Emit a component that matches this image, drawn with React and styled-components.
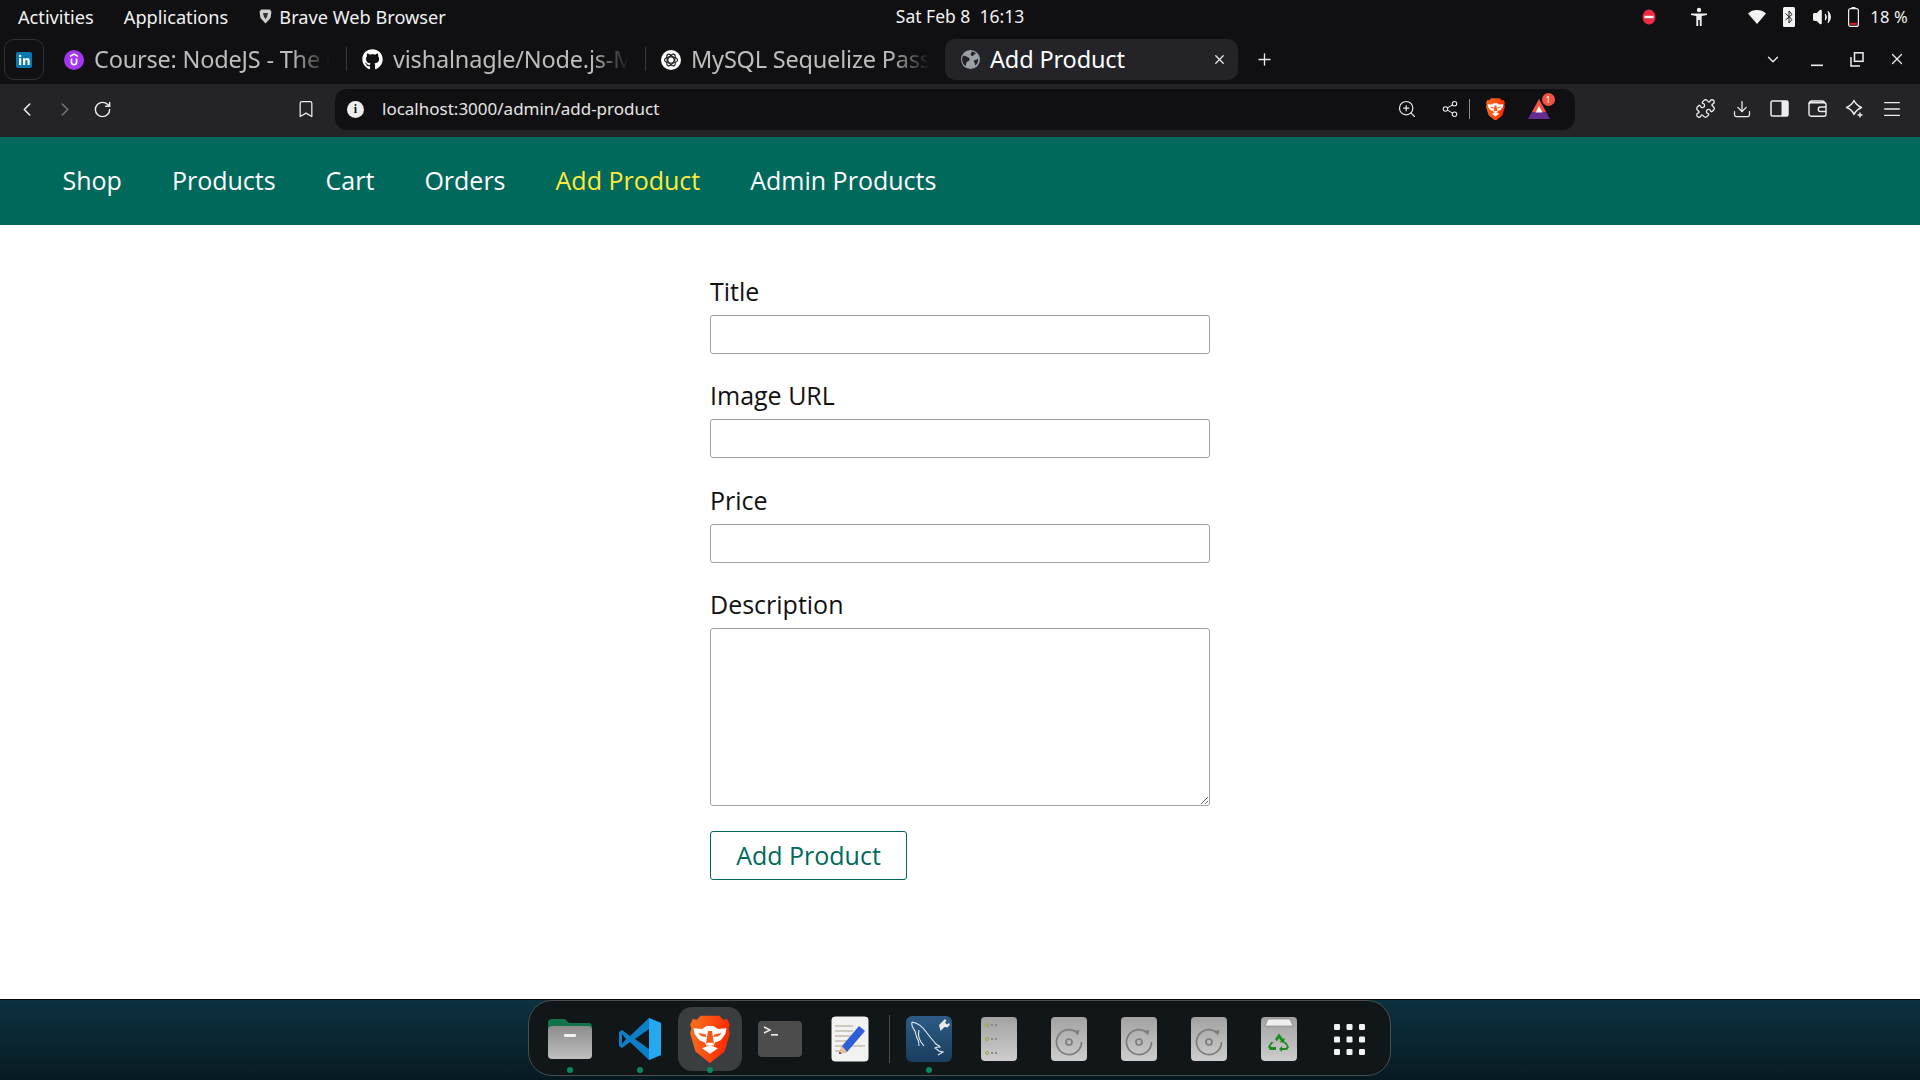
import React from "react";
import styled, { createGlobalStyle } from "styled-components";
import {
  ChevronLeft, ChevronRight, RotateCw, Bookmark, ZoomIn, Share2, Puzzle, Download,
  Menu, X, Plus, ChevronDown, Volume2,
} from "lucide-react";
import { FaGithub } from "react-icons/fa";

const Global = createGlobalStyle`
  html, body { margin: 0; padding: 0; background: #fff; }
  * { box-sizing: border-box; }
`;
const ui = `"Noto Sans", "Open Sans", sans-serif`;

const Screen = styled.div`
  width: 1920px; height: 1080px; display: flex; flex-direction: column; overflow: hidden;
  font-family: "Open Sans", sans-serif; background: #fff;
`;
const TopBar = styled.div`
  height: 33px; background: #101012; color: #f2f2f2; display: flex; align-items: center;
  font-family: ${ui}; font-size: 18.2px; padding: 0 12px 0 18px; position: relative;
`;
const TopItem = styled.span`
  margin-right: ${p => p.$mr || 0}px; display: inline-flex; align-items: center; gap: 7px; white-space: nowrap;
`;
const Clock = styled.span`
  position: absolute; left: 50%; top: 4px; transform: translateX(-50%); white-space: pre; font-size: 17.5px;
`;
const Tray = styled.div`
  margin-left: auto; display: flex; align-items: center; color: #f2f2f2;
`;
const TrayIcon = styled.span`
  display: inline-flex; margin-left: ${p => p.$ml || 0}px;
`;
const Percent = styled.span`margin-left: 11px; font-size: 16.5px; letter-spacing: .2px;`;

const TabStrip = styled.div`
  height: 51px; background: #101012; display: flex; align-items: flex-start; padding: 6px 4px 0 4px; position: relative;
`;
const Pinned = styled.div`
  width: 40px; height: 41px; border: 1px solid #303236; border-radius: 10px; display: flex; align-items: center; justify-content: center; margin-right: 5px;
`;
const Tab = styled.div`
  width: ${p => p.$w}px; height: 41px; display: flex; align-items: center; border-radius: 10px; flex: none; position: relative;
  padding-left: ${p => (p.$active ? 16 : 15)}px; padding-right: ${p => (p.$active ? 0 : 16)}px; gap: 10px;
  background: ${p => (p.$active ? "#232328" : "transparent")};
`;
const TabTitle = styled.span`
  font-family: ${ui}; font-size: 23.5px; letter-spacing: ${p => (p.$active ? "-0.15px" : "-0.2px")}; white-space: nowrap; overflow: hidden; flex: 1;
  line-height: 30px; padding-bottom: 2px;
  color: ${p => (p.$active ? "#fff" : "#bdbdbd")};
  ${p => (p.$active ? "" : `mask-image: linear-gradient(to right, #000 84%, transparent 100%);`)}
`;
const TabSep = styled.span`width: 1px; height: 24px; background: #3a3b3f; margin-top: 8px; flex: none;`;
const TabClose = styled.span`display: inline-flex; margin-right: 11px; color: #eee;`;
const NewTab = styled.span`display: inline-flex; color: #e8e8e8; margin: 11px 0 0 17px;`;
const WinControls = styled.div`
  margin-left: auto; display: flex; align-items: center; color: #eee; height: 32px; margin-top: 4px; margin-right: 10px; gap: 22px;
`;
const WinBtn = styled.span`display: inline-flex; width: 18px; justify-content: center; margin-right: ${p => p.$mr || 0}px;`;

const Toolbar = styled.div`
  height: 53px; background: #232328; display: flex; align-items: flex-start; padding: 5px 14px 0 16px; color: #eee;
`;
const ToolBtn = styled.span`
  display: inline-flex; width: 22px; height: 40px; align-items: center; justify-content: center; flex: none;
  margin-right: ${p => p.$mr || 0}px; margin-left: ${p => p.$ml || 0}px; color: ${p => p.$dim ? "#77787c" : "#eee"};
`;
const UrlBar = styled.div`
  width: 1240px; height: 41px; background: #101012; border-radius: 12px; display: flex; align-items: center; padding: 0 14px 1px 12px; flex: none; margin-left: 18px; margin-right: 119px;
`;
const InfoDot = styled.span`
  width: 17px; height: 17px; border-radius: 50%; background: #eee; color: #101012; font: 700 12px/17px "Liberation Serif", serif; text-align: center; flex: none; margin-right: 18px;
`;
const UrlText = styled.span`
  font-family: ${ui}; font-size: 17px; line-height: 22px; padding-bottom: 1px; color: #e6e6e6; flex: 1;
`;
const UrlSep = styled.span`width: 1px; height: 20px; background: #8b8b8b; margin: 0 15.5px 0 8.5px;`;
const BatWrap = styled.span`position: relative; display: inline-flex; margin-left: 23px; margin-right: 11.5px;`;
const Badge = styled.span`
  position: absolute; top: -6px; right: -5px; width: 13px; height: 13px; background: #f0533f; border-radius: 50%; color: #fff; font: 9px/13px ${ui}; text-align: center;
`;
const Extras = styled.div`display: flex; gap: 15.4px; align-items: center; height: 41px; margin-top: -1px;`;

const Header = styled.header`
  height: 88px; background: #00695c; display: flex; align-items: center; padding: 0 62.5px 1px; gap: 50px; flex: none;
`;
const NavLink = styled.a`
  font-size: 25px; color: ${p => (p.$active ? "#ffeb3b" : "#fff")}; text-decoration: none; line-height: 1;
`;

const Main = styled.main`
  flex: 1; background: #fff; padding-top: 50px; min-height: 0;
`;
const Form = styled.form`width: 500px; margin: 0 auto; display: block;`;
const Control = styled.div`margin-bottom: 25.3px;`;
const Label = styled.label`
  display: block; font-size: 25px; line-height: 33px; color: #111; margin-bottom: 7px;
`;
const Input = styled.input`
  display: block; width: 100%; height: 39px; border: 1px solid #a1a1a1; border-radius: 3px; background: #fff; outline: none;
`;
const Textarea = styled.textarea`
  display: block; width: 100%; height: 178px; border: 1px solid #a1a1a1; border-radius: 3px; background: #fff; outline: none; resize: vertical;
`;
const Submit = styled.button`
  display: block; width: 197px; height: 49px; background: #fff; border: 1px solid #00695c; border-radius: 3px;
  color: #00695c; font: 25px "Open Sans", sans-serif; padding: 0 0 2px; cursor: pointer;
`;

const DockArea = styled.div`
  height: 81px; flex: none; border-top: 1px solid #050505; background: linear-gradient(180deg, #0c3140 0%, #0a2530 55%, #071a22 100%);
  display: flex; justify-content: center; padding: 0 1px 0 0;
`;
const Dock = styled.div`
  width: 863px; height: 76px; background: #111619; border: 1px solid #4a4d4f; border-radius: 24px; display: flex; padding: 6px 6px 0 6px;
`;
const Slot = styled.div`
  width: ${p => (p.$focus ? 64 : 70)}px; height: 64px; display: flex; align-items: center; justify-content: center; border-radius: 14px; position: relative; flex: none;
  background: ${p => (p.$focus ? "#3b3e40" : "transparent")};
  margin: 0 ${p => (p.$focus ? 3 : 0)}px;
`;
const RunDot = styled.span`
  position: absolute; bottom: -2px; left: 50%; margin-left: -3px; width: 6px; height: 6px; border-radius: 50%; background: #0a8a5c;
`;
const DockSep = styled.span`width: 1px; height: 48px; background: #4b4e50; margin: 8px 4px 0 4px; flex: none;`;

const Linkedin = () => (
  <svg width="16" height="16" viewBox="0 0 16 16"><rect width="16" height="16" rx="2" fill="#0a78b5"/><rect x="3" y="6.2" width="2.2" height="6.8" fill="#fff"/><circle cx="4.1" cy="4" r="1.3" fill="#fff"/><path d="M7 6.2h2.1v1c.5-.8 1.3-1.2 2.2-1.2 1.7 0 2.4 1.1 2.4 2.9V13h-2.2V9.4c0-.9-.3-1.5-1.1-1.5-.9 0-1.2.7-1.2 1.5V13H7z" fill="#fff"/></svg>
);
const Udemy = () => (
  <svg width="20" height="20" viewBox="0 0 20 20"><circle cx="10" cy="10" r="10" fill="#a435f0"/><path d="M10 3.2 14 5.6v1.6L10 4.9 6 7.200V5.600z" fill="#fff"/><path d="M6.600 8.500h1.700v3.500c0 1.100.7 1.800 1.700 1.800s1.700-.7 1.700-1.800V8.500h1.700v3.700c0 2-1.500 3.300-3.400 3.300s-3.400-1.300-3.400-3.300z" fill="#fff"/></svg>
);
const ChatGpt = () => (
  <svg width="20" height="20" viewBox="0 0 20 20"><circle cx="10" cy="10" r="10" fill="#fff"/><g fill="none" stroke="#222" strokeWidth="1.200"><ellipse cx="10" cy="10" rx="6.500" ry="3.200"/><ellipse cx="10" cy="10" rx="6.500" ry="3.200" transform="rotate(60 10 10)"/><ellipse cx="10" cy="10" rx="6.500" ry="3.200" transform="rotate(120 10 10)"/></g></svg>
);
const Globe = () => (
  <svg width="19" height="19" viewBox="0 0 19 19"><circle cx="9.500" cy="9.500" r="9.500" fill="#9aa0a6"/><path d="M2 6c2-.5 3 .5 4.500 1s2.500 1.500 2 3-2.500 1-3 2.500-.5 3-1 3.500C2.500 14.500 1 12 1 9.500 1 8.200 1.500 7 2 6zM11 1.500c1.500.2 3 1 4 2-1 .8-2 .8-2.500 1.800s-1.500 1-2.500.3.2-2.800 1-4.100zM17 9c.4 2.500-.5 4.800-2.500 6.500-.7-1-.5-2.500-1.500-3.500s.5-2 2-2.300 1.200-.7 2-.7z" fill="#232328"/></svg>
);
const BraveGlyph = ({ s = 20 }) => (
  <svg width={s} height={s * 1.21} viewBox="0 0 120 146">
    <defs><linearGradient id="bv" x1="0" x2="1" y1="0" y2="0.2"><stop offset="0" stopColor="#f4711f"/><stop offset="0.55" stopColor="#fb4f12"/><stop offset="1" stopColor="#ff2a00"/></linearGradient></defs>
    <path d="M32 2H88L100 14 112 12 120 30 116 40 120 55 104 110 60 145 16 110 0 55 4 40 0 30 8 12 20 14Z" fill="url(#bv)"/>
    <path d="M10 40 36 42 50 33H70L84 42 110 40 106 58 92 76 74 84 72 92H48L46 84 28 76 14 58Z" fill="#fff"/>
    <path d="M24 54 46 58 50 66 34 64ZM96 54 74 58 70 66 86 64ZM54 48H66L72 86H48Z" fill="#f9561a"/>
    <path d="M48 84H72L60 92Z" fill="#fff"/>
    <path d="M36 100 60 91 84 100 60 117Z" fill="#fff"/>
  </svg>
);
const TrayShield = () => (
  <svg width="13" height="15" viewBox="0 0 13 15"><path d="M2 .5h9l1.500 2.500-1 6L6.500 14.500 1.500 9l-1-6z" fill="#cfcfcf"/><path d="M4 4h5l-1 4-1.500 2L5 8z" fill="#333"/></svg>
);
const Bat = () => (
  <svg width="22" height="20" viewBox="0 0 22 20"><path d="M11 0 22 20H0z" fill="#662d91"/><path d="M11 0 18 13H4z" fill="#f0533f"/><path d="M11 7l3.500 6.500h-7z" fill="#fff"/></svg>
);
const StopIcon = () => (
  <svg width="14" height="16" viewBox="0 0 14 16"><ellipse cx="7" cy="8" rx="6.500" ry="7.500" fill="#ed2b45"/><rect x="2.500" y="6.800" width="9" height="2.400" fill="#fff"/></svg>
);
const Person = () => (
  <svg width="16" height="20" viewBox="0 0 16 20" fill="#eee"><circle cx="8" cy="3" r="2.200"/><path d="M0 6.500h16v1.600l-5.300.9V19H8.800v-6H7.200v6H5.300V9L0 8.100z"/></svg>
);
const Wifi = () => (
  <svg width="18" height="16" viewBox="0 0 18 16"><path d="M0 4.500C2.500 2 5.500 1 9 1s6.500 1 9 3.500L9 15z" fill="#f2f2f2"/></svg>
);
const BluetoothBox = () => (
  <svg width="12" height="20" viewBox="0 0 12 20"><rect width="12" height="20" rx="1.500" fill="#f2f2f2"/><path d="M2.500 6.500 9 12.500 6 16V4l3 3.500L2.500 13" fill="none" stroke="#222" strokeWidth="1"/></svg>
);
const BatteryIcon = () => (
  <svg width="11" height="20" viewBox="0 0 11 20"><rect x="3.500" y="0" width="4" height="2" fill="#eee"/><rect x=".6" y="1.600" width="9.800" height="17.800" rx="2" fill="none" stroke="#eee" strokeWidth="1.200"/><rect x="2" y="15.800" width="7" height="2" fill="#e01b24"/></svg>
);
const RestoreIcon = () => (
  <svg width="14" height="15" viewBox="0 0 14 15" fill="none" stroke="#eee" strokeWidth="1.500"><rect x="4.500" y=".8" width="8.500" height="8.500"/><path d="M1 5v9h9"/></svg>
);
const MinIcon = () => (
  <svg width="14" height="15" viewBox="0 0 14 15"><rect x="1" y="12.500" width="12" height="1.600" fill="#eee"/></svg>
);
const SidebarIcon = () => (
  <svg width="19" height="17" viewBox="0 0 19 17"><rect x="1" y="1" width="17" height="15" rx="1.500" fill="none" stroke="#eee" strokeWidth="1.500"/><rect x="11.500" y="1" width="6.500" height="15" fill="#eee"/></svg>
);
const WalletIcon = () => (
  <svg width="19" height="17" viewBox="0 0 19 17" fill="none" stroke="#eee" strokeWidth="1.400"><rect x="1" y="2.800" width="17" height="13.400" rx="2"/><path d="M1 4c.2-2 1.500-3 3-3h10c1.500 0 2.500.8 3 2"/><path d="M18 7h-5.500a2 2 0 0 0 0 4.500H18"/></svg>
);
const SparkIcon = () => (
  <svg width="19" height="19" viewBox="0 0 19 19" fill="none" stroke="#eee" strokeWidth="1.400"><path d="M9 1.500Q11 6 16.500 8.500 11.500 10.500 9 15.500 7 10.500 1.500 8.500 7 6 9 1.500Z" strokeLinejoin="round"/><path d="M15 13.500v5M12.500 16h5"/></svg>
);

const FolderIcon = () => (
  <svg width="46" height="42" viewBox="0 0 46 42">
    <defs><linearGradient id="fg" x1="0" x2="0" y1="0" y2="1"><stop offset="0" stopColor="#8c8c8c"/><stop offset="1" stopColor="#c0c0c0"/></linearGradient></defs>
    <path d="M1 5q0-4 4-4h12q2 0 3 2t3 2h19q3 0 3 4v8H1z" fill="#12734a"/>
    <rect x="1" y="8" width="44" height="33" rx="4" fill="url(#fg)"/>
    <rect x="17" y="16" width="12" height="3" rx="1" fill="#f2f2f2"/>
  </svg>
);
const VsCode = () => (
  <svg width="44" height="44" viewBox="0 0 44 44">
    <path d="M31 1 12 19 4 13 1 15v14l3 2 8-6 19 18 12-5V6z" fill="#0e7fc7"/>
    <path d="M31 1l12 5v32l-12 5z" fill="#24a8f0"/>
    <path d="M31 12v20L17 22z" fill="#111619"/>
    <path d="M4 17l4 5-4 5z" fill="#111619"/>
  </svg>
);
const TerminalIcon = () => (
  <svg width="44" height="36" viewBox="0 0 44 36">
    <rect width="44" height="36" rx="4" fill="#4c4c4c"/>
    <path d="M6 6l6 3-6 3" fill="none" stroke="#eee" strokeWidth="1.400"/>
    <rect x="13" y="13" width="7" height="1.600" fill="#eee"/>
  </svg>
);
const GeditIcon = () => (
  <svg width="38" height="46" viewBox="0 0 38 46">
    <rect x=".5" y=".5" width="37" height="45" rx="4" fill="#f2f2f2"/>
    <g fill="#cfc9bd"><rect x="4" y="9" width="18" height="2"/><rect x="4" y="14" width="18" height="2"/><rect x="4" y="19" width="16" height="2"/><rect x="4" y="24" width="12" height="2"/><rect x="4" y="29" width="30" height="2"/><rect x="4" y="34" width="8" height="2"/></g>
    <path d="M28 10l6 5-18 21-8 2 3-8z" fill="#2f5fd8"/>
    <path d="M11 30l5 6-8 2z" fill="#f0c090"/>
    <path d="M8.800 35.500l1.600 2L8 38z" fill="#333"/>
  </svg>
);
const MysqlIcon = () => (
  <svg width="46" height="46" viewBox="0 0 46 46">
    <defs><linearGradient id="my" x1="0" x2="0" y1="0" y2="1"><stop offset="0" stopColor="#2d5a86"/><stop offset="1" stopColor="#1a3e5e"/></linearGradient></defs>
    <rect width="46" height="46" rx="6" fill="url(#my)"/>
    <path d="M6 6c6 1 11 5 15 11 3 4 5 6 8 10 1 2 4 2 5 4-2 0-4 0-5 1l4 3 4 1-5 3M6 6c-1 4 1 6 3 9 1 3 1 6 3 9 1 2 1 4 1 6M13 14c-1 4 0 9 2 12l3 4" fill="none" stroke="#e8eef3" strokeWidth="1.100"/>
    <path d="M33 9l6-6 1.500 1.500-1.500 2 2 2 2-1.500 1 1.500-2.500 3-3-.5-4 4z" fill="#e8e8e8"/>
  </svg>
);
const Tile = styled.svg`display: block;`;
const TileDefs = ({ id }) => (
  <defs><linearGradient id={id} x1="0" x2="0" y1="0" y2="1"><stop offset="0" stopColor="#a2a2a2"/><stop offset="1" stopColor="#cdcdcd"/></linearGradient></defs>
);
const ServerIcon = () => (
  <Tile width="36" height="44" viewBox="0 0 36 44">
    <TileDefs id="sv"/><rect width="36" height="44" rx="4" fill="url(#sv)"/>
    {[8, 22, 36].map(y => (
      <g key={y}><circle cx="6" cy={y} r="1.500" fill="none" stroke="#8fb23a"/><rect x="10" y={y - 1} width="2" height="2" fill="#888"/><rect x="14" y={y - 1} width="2" height="2" fill="#888"/></g>
    ))}
  </Tile>
);
const DiscIcon = ({ id }) => (
  <Tile width="36" height="44" viewBox="0 0 36 44">
    <TileDefs id={id}/><rect width="36" height="44" rx="4" fill={`url(#${id})`}/>
    <path d="M26 15.500A12.500 12.500 0 1 0 30.500 25" fill="none" stroke="#7c7c7c" strokeWidth="1.700"/>
    <path d="M23 14l5.500-1-1.500 5.500z" fill="#7c7c7c"/>
    <circle cx="18" cy="25" r="3" fill="none" stroke="#7c7c7c" strokeWidth="1.700"/>
  </Tile>
);
const TrashIcon = () => (
  <Tile width="36" height="44" viewBox="0 0 36 44">
    <TileDefs id="tr"/><rect width="36" height="44" rx="4" fill="url(#tr)"/>
    <path d="M4 9l3-7h22l3 7z" fill="#eee" stroke="#777" strokeWidth=".6"/>
    <g fill="#1c8a1c"><path d="M14 22l4-5.500 4 5.500 1.800-1-.6 5-4.700-1 1.500-1-2-2.800-2 3z"/><path d="M25 25l3 5-2 3h-5v2l-3-3 3-3v2h4l1-2-3.500-3.300z"/><path d="M10 25l-3 5 2 3h6v-3H10l-.5-1 3-4z"/></g>
  </Tile>
);
const AppGrid = () => (
  <svg width="31" height="31" viewBox="0 0 31 31" fill="#f2f2f2">
    {[0, 12.5, 25].flatMap(y => [0, 12.5, 25].map(x => <rect key={`${x}-${y}`} x={x} y={y} width="6" height="6" rx="1.200"/>))}
  </svg>
);

export default function App() {
  return (
    <Screen>
      <Global />
      <TopBar>
        <TopItem $mr={30}>Activities</TopItem>
        <TopItem $mr={31}>Applications</TopItem>
        <TopItem><TrayShield />Brave Web Browser</TopItem>
        <Clock>Sat Feb 8  16:13</Clock>
        <Tray>
          <TrayIcon><StopIcon /></TrayIcon>
          <TrayIcon $ml={35}><Person /></TrayIcon>
          <TrayIcon $ml={41}><Wifi /></TrayIcon>
          <TrayIcon $ml={17}><BluetoothBox /></TrayIcon>
          <TrayIcon $ml={17}><Volume2 size={20} fill="#f2f2f2" strokeWidth={1.500} /></TrayIcon>
          <TrayIcon $ml={16}><BatteryIcon /></TrayIcon>
          <Percent>18 %</Percent>
        </Tray>
      </TopBar>

      <TabStrip>
        <Pinned><Linkedin /></Pinned>
        <Tab $w={297}><Udemy /><TabTitle>Course: NodeJS - The Complete Guide</TabTitle></Tab>
        <TabSep />
        <Tab $w={298}><FaGithub size={21} color="#fff" /><TabTitle>vishalnagle/Node.js-MySQL</TabTitle></Tab>
        <TabSep />
        <Tab $w={299}><ChatGpt /><TabTitle>MySQL Sequelize Password</TabTitle></Tab>
        <Tab $active $w={293}><Globe /><TabTitle $active>Add Product</TabTitle><TabClose><X size={15} strokeWidth={2} /></TabClose></Tab>
        <NewTab><Plus size={19} strokeWidth={1.700} /></NewTab>
        <WinControls>
          <WinBtn $mr={4}><ChevronDown size={21} strokeWidth={1.800} /></WinBtn>
          <WinBtn><MinIcon /></WinBtn>
          <WinBtn><RestoreIcon /></WinBtn>
          <WinBtn><X size={20} strokeWidth={1.600} /></WinBtn>
        </WinControls>
      </TabStrip>

      <Toolbar>
        <ToolBtn $mr={16}><ChevronLeft size={23} strokeWidth={1.700} /></ToolBtn>
        <ToolBtn $mr={15} $dim><ChevronRight size={23} strokeWidth={1.700} /></ToolBtn>
        <ToolBtn $mr={182}><RotateCw size={19} strokeWidth={1.800} /></ToolBtn>
        <ToolBtn><Bookmark size={20} strokeWidth={1.500} /></ToolBtn>
        <UrlBar>
          <InfoDot>i</InfoDot>
          <UrlText>localhost:3000/admin/add-product</UrlText>
          <ToolBtn><ZoomIn size={20} strokeWidth={1.400} /></ToolBtn>
          <ToolBtn $ml={21}><Share2 size={18} strokeWidth={1.400} /></ToolBtn>
          <UrlSep />
          <BraveGlyph s={19} />
          <BatWrap><Bat /><Badge>1</Badge></BatWrap>
        </UrlBar>
        <Extras>
          <ToolBtn><Puzzle size={21} strokeWidth={1.500} /></ToolBtn>
          <ToolBtn><Download size={20} strokeWidth={1.500} /></ToolBtn>
          <ToolBtn><SidebarIcon /></ToolBtn>
          <ToolBtn><WalletIcon /></ToolBtn>
          <ToolBtn><SparkIcon /></ToolBtn>
          <ToolBtn><Menu size={22} strokeWidth={1.400} /></ToolBtn>
        </Extras>
      </Toolbar>

      <Header>
        <NavLink>Shop</NavLink>
        <NavLink>Products</NavLink>
        <NavLink>Cart</NavLink>
        <NavLink>Orders</NavLink>
        <NavLink $active>Add Product</NavLink>
        <NavLink>Admin Products</NavLink>
      </Header>

      <Main>
        <Form onSubmit={e => e.preventDefault()}>
          <Control><Label>Title</Label><Input type="text" /></Control>
          <Control><Label>Image URL</Label><Input type="text" /></Control>
          <Control><Label>Price</Label><Input type="text" /></Control>
          <Control><Label>Description</Label><Textarea /></Control>
          <Submit type="submit">Add Product</Submit>
        </Form>
      </Main>

      <DockArea>
        <Dock>
          <Slot><FolderIcon /><RunDot /></Slot>
          <Slot><VsCode /><RunDot /></Slot>
          <Slot $focus><BraveGlyph s={40} /><RunDot /></Slot>
          <Slot><TerminalIcon /></Slot>
          <Slot><GeditIcon /></Slot>
          <DockSep />
          <Slot><MysqlIcon /><RunDot /></Slot>
          <Slot><ServerIcon /></Slot>
          <Slot><DiscIcon id="d1" /></Slot>
          <Slot><DiscIcon id="d2" /></Slot>
          <Slot><DiscIcon id="d3" /></Slot>
          <Slot><TrashIcon /></Slot>
          <Slot><AppGrid /></Slot>
        </Dock>
      </DockArea>
    </Screen>
  );
}
